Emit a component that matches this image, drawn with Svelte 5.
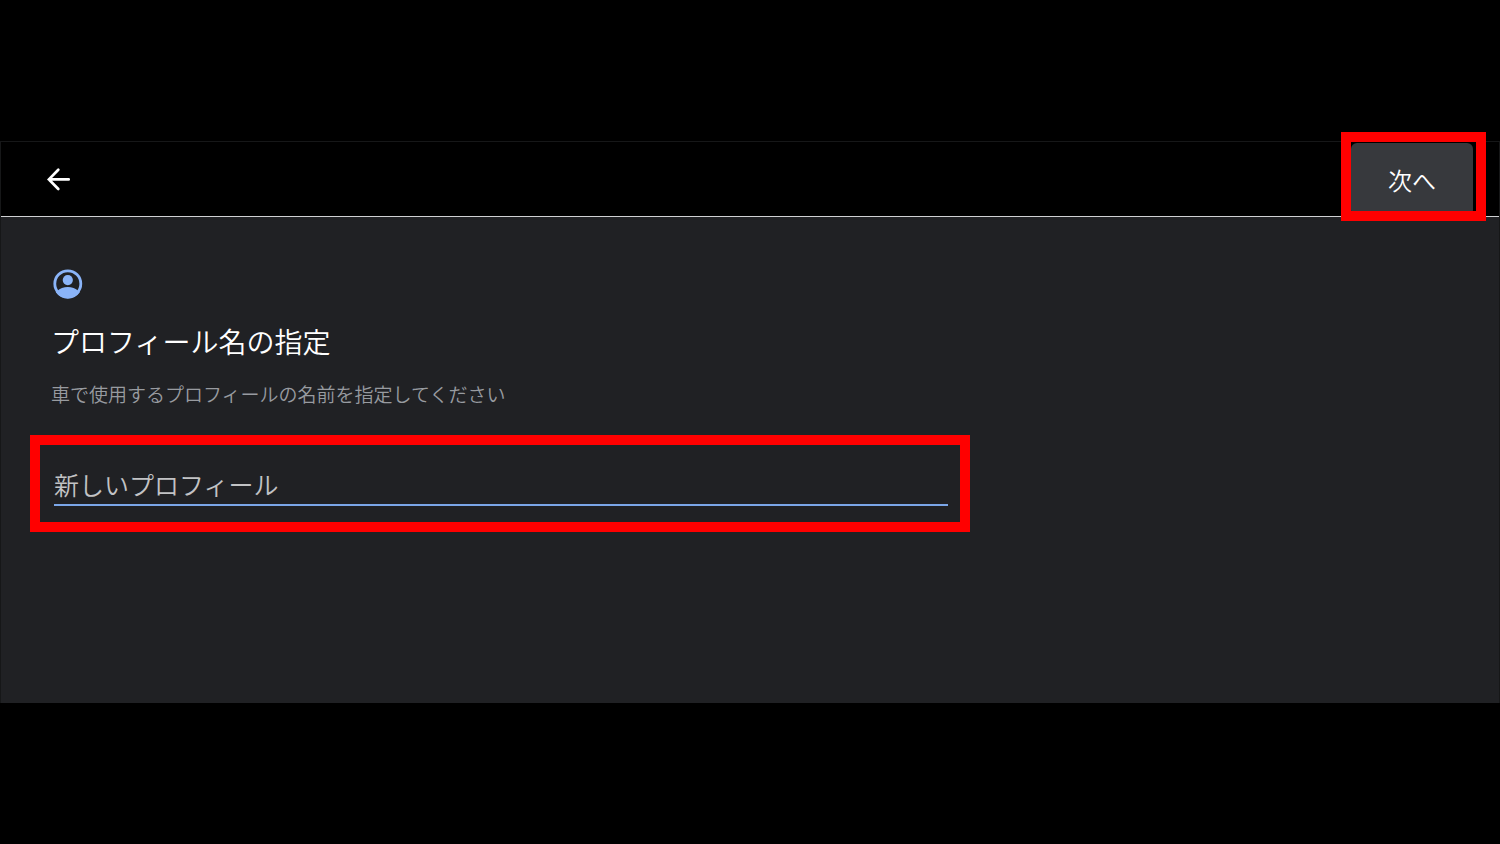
<script lang="ts">
	let name = '';
</script>

<div class="screen">
	<div class="panel">
		<header>
			<button class="back" type="button" aria-label="戻る">
				<svg viewBox="0 0 28 28" width="28" height="28" aria-hidden="true">
					<path d="M24.7 13.4H5M14.3 3.8L4.9 13.4L14.3 23" />
				</svg>
			</button>
			<div class="action">
				<button class="next" type="submit" form="profile">次へ</button>
				<span class="marker"></span>
			</div>
		</header>

		<main>
			<div class="intro">
				<svg class="avatar" viewBox="-17 -15 34 30" width="34" height="30" aria-hidden="true">
					<circle class="ring" r="13" cx="-.2" cy="-.2" />
					<circle cx="-.2" cy="-3.9" r="5.1" />
					<path d="M-10.7 7C-8.2 4.4-4.2 3-.2 3S7.8 4.4 10.3 7L11.8 8.2A14.4 14.4 0 0 1-12.2 8.2Z" />
				</svg>
				<h1>プロフィール名の指定</h1>
				<p id="hint">車で使用するプロフィールの名前を指定してください</p>
			</div>

			<form id="profile" on:submit|preventDefault>
				<input
					type="text"
					placeholder="新しいプロフィール"
					aria-label="プロフィール名"
					aria-describedby="hint"
					bind:value={name}
				/>
			</form>
		</main>
	</div>
</div>

<style>
	:global(body) {
		margin: 0;
		background-color: #000;
	}
	.screen {
		box-sizing: border-box;
		min-height: 100vh;
		padding-top: 141px;
		background-color: #000;
		color: #fff;
		font-family: 'Noto Sans CJK JP', sans-serif;
		font-weight: 350;
	}
	.panel {
		border: 1px solid #161718;
		border-bottom: 0;
	}
	header {
		display: flex;
		align-items: center;
		justify-content: space-between;
		padding: 1px 26px 0 43px;
		border-bottom: 1px solid #d0d1d3;
	}
	button {
		appearance: none;
		border: 0;
		font: inherit;
		color: inherit;
		cursor: pointer;
	}
	.back {
		display: flex;
		padding: 0;
		background-color: transparent;
	}
	.back path {
		fill: none;
		stroke: #fff;
		stroke-width: 2.7;
		stroke-linecap: round;
	}
	.action {
		position: relative;
	}
	.next {
		display: block;
		height: 73px;
		padding: 0 37px;
		border-radius: 6px;
		background-color: #37393d;
		font-size: 24px;
		line-height: 36px;
	}
	.marker {
		position: absolute;
		inset: -11px -13px -5px -10px;
		border: 10px solid #f00;
		pointer-events: none;
	}
	main {
		padding: 52px 29px 171px;
		background-color: #202124;
	}
	.intro {
		padding: 0 21px;
	}
	.avatar {
		display: block;
		fill: #8ab4f8;
	}
	.avatar .ring {
		fill: none;
		stroke: #8ab4f8;
		stroke-width: 2.8;
	}
	h1 {
		margin: 22px 0 0;
		font-size: 28px;
		font-weight: inherit;
		line-height: 40px;
	}
	p {
		margin: 19px 0 0;
		color: #989ba0;
		font-size: 19px;
		line-height: 28px;
	}
	form {
		box-sizing: border-box;
		max-width: 940px;
		margin-top: 27px;
		padding: 20px 12px 16px 14px;
		border: 10px solid #f00;
	}
	input {
		display: block;
		box-sizing: border-box;
		width: 100%;
		height: 41px;
		padding: 0 0 2px;
		border: 0;
		border-bottom: 2px solid #7ba6e8;
		border-radius: 0;
		outline: none;
		background-color: transparent;
		color: #fff;
		font: inherit;
		font-size: 25px;
	}
	input::placeholder {
		color: #c2c3c5;
		opacity: 1;
	}
</style>
